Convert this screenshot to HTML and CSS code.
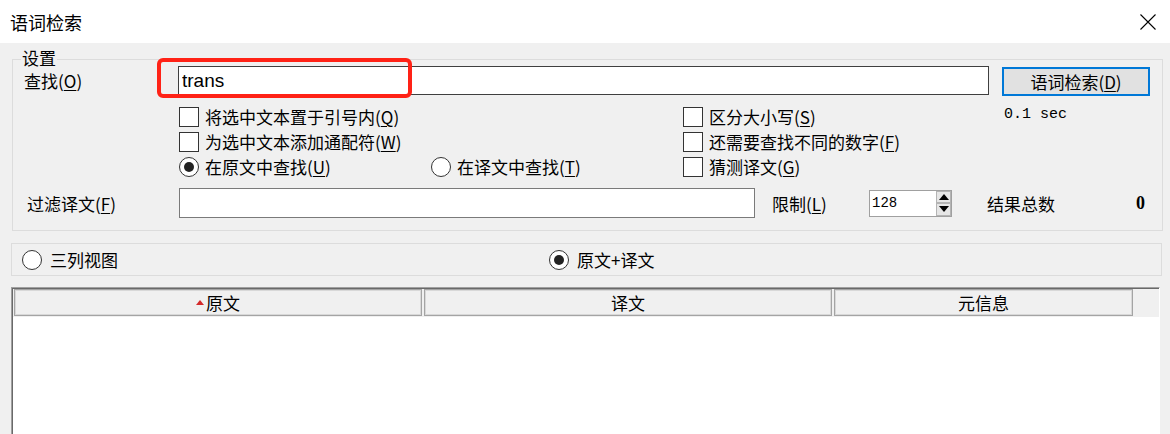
FILE: index.html
```html
<!DOCTYPE html>
<html lang="zh-CN">
<head>
    <meta charset="UTF-8">
    <title>语词检索</title>
    <link rel="stylesheet" href="styles.css">
</head>
<body>
    <div class="titlebar">
        <span class="title">语词检索</span>
        <svg class="close" viewBox="0 0 16 16" width="16" height="16">
            <path d="M0.5 0.5 L15.5 15.5 M15.5 0.5 L0.5 15.5" stroke="#000" stroke-width="1.1" fill="none"/>
        </svg>
    </div>

    <div class="group">
        <div class="group-title">设置</div>

        <div class="search-row">
            <span class="field-label">查找(<u>O</u>)</span>
            <input class="search-box" type="text" value="trans" readonly>
            <button class="search-btn">语词检索(<u>D</u>)</button>
            <div class="highlight"></div>
        </div>

        <div class="options">
            <label class="opt span2"><span class="box"></span><span>将选中文本置于引号内(<u>Q</u>)</span></label>
            <label class="opt"><span class="box"></span><span>区分大小写(<u>S</u>)</span></label>
            <span class="elapsed">0.1 sec</span>

            <label class="opt span2"><span class="box"></span><span>为选中文本添加通配符(<u>W</u>)</span></label>
            <label class="opt col3"><span class="box"></span><span>还需要查找不同的数字(<u>F</u>)</span></label>

            <label class="opt col1"><span class="box radio on"></span><span>在原文中查找(<u>U</u>)</span></label>
            <label class="opt"><span class="box radio"></span><span>在译文中查找(<u>T</u>)</span></label>
            <label class="opt"><span class="box"></span><span>猜测译文(<u>G</u>)</span></label>
        </div>

        <div class="filter-row">
            <span class="filter-label">过滤译文(<u>F</u>)</span>
            <input class="filter-box" type="text" readonly>
            <span class="limit-label">限制(<u>L</u>)</span>
            <div class="spinner">
                <span class="spin-value">128</span>
                <div class="spin">
                    <span class="spin-btn"><i class="arrow up"></i></span>
                    <span class="spin-btn"><i class="arrow down"></i></span>
                </div>
            </div>
            <span class="total-label">结果总数</span>
            <span class="total">0</span>
        </div>
    </div>

    <div class="view-bar">
        <label class="opt view-opt"><span class="box radio"></span><span>三列视图</span></label>
        <label class="opt"><span class="box radio on"></span><span>原文+译文</span></label>
    </div>

    <div class="results">
        <div class="results-inner">
            <div class="results-head">
                <div class="col col-src"><i class="sort"></i><span>原文</span></div>
                <div class="col col-tgt">译文</div>
                <div class="col col-meta">元信息</div>
            </div>
        </div>
    </div>
</body>
</html>
```

FILE: styles.css
```css
* {
    margin: 0;
    padding: 0;
    box-sizing: border-box;
}

body {
    width: 1170px;
    height: 434px;
    overflow: hidden;
    background: #f0f0f0;
    color: #000;
    font-family: "Noto Sans CJK SC", sans-serif;
    font-size: 17px;
}

u {
    text-decoration-thickness: 1px;
    text-underline-offset: 2px;
}

/* window caption */
.titlebar {
    height: 43px;
    background: #fff;
    display: flex;
    align-items: center;
    justify-content: space-between;
    padding: 0 14px 0 10px;
}

.title {
    font-size: 18px;
    line-height: 20px;
}

.close {
    display: block;
}

/* settings group */
.group {
    margin: 16px 7px 0 12px;
    border: 1px solid #dcdcdc;
    padding-bottom: 12px;
}

.group-title {
    width: fit-content;
    margin: -10px 0 0 8px;
    padding: 0 1px;
    line-height: 16px;
    background: #f0f0f0;
}

.search-row {
    position: relative;
    display: flex;
    align-items: flex-start;
    height: 30px;
    padding-left: 11px;
}

.field-label {
    width: 154px;
    line-height: 29px;
}

.search-box {
    width: 811px;
    height: 29px;
    border: 1px solid #3f3f3f;
    background: #fff;
    padding: 0 3px;
    font-family: "Liberation Sans", Arial, sans-serif;
    font-size: 19px;
    color: #000;
    outline: none;
}

.search-btn {
    width: 148px;
    height: 29px;
    margin: 1px 0 0 13px;
    border: 2px solid #0078d7;
    background: #e1e1e1;
    font-family: inherit;
    font-size: 17px;
    color: #000;
    line-height: 24px;
}

/* red marker drawn over the query field */
.highlight {
    position: absolute;
    left: 144px;
    top: -8px;
    width: 255px;
    height: 40px;
    border: 4px solid #ff2216;
    border-radius: 6px;
    pointer-events: none;
}

.options {
    display: grid;
    grid-template-columns: 252px 252px 321px auto;
    grid-auto-rows: 25px;
    margin-top: 8px;
    padding-left: 166px;
}

.opt {
    display: flex;
    align-items: center;
    gap: 6px;
    white-space: nowrap;
}

.span2 {
    grid-column: 1 / span 2;
}

.col1 {
    grid-column: 1;
}

.col3 {
    grid-column: 3;
}

.box {
    flex: none;
    width: 20px;
    height: 20px;
    border: 1px solid #333;
    background: #fff;
}

.radio {
    border-radius: 50%;
    display: flex;
    align-items: center;
    justify-content: center;
}

.radio.on::after {
    content: "";
    width: 10px;
    height: 10px;
    border-radius: 50%;
    background: #222;
}

.elapsed {
    align-self: start;
    margin-top: 1px;
    line-height: 20px;
    font-family: "Liberation Mono", monospace;
    font-size: 15px;
}

.filter-row {
    display: flex;
    align-items: center;
    height: 30px;
    margin-top: 9px;
    padding-left: 14px;
}

.filter-label {
    width: 152px;
}

.filter-box {
    width: 576px;
    height: 30px;
    border: 1px solid #7a7a7a;
    background: #fff;
    outline: none;
}

.limit-label {
    width: 97px;
    margin-left: 17px;
}

.spinner {
    display: flex;
    width: 83px;
    height: 27px;
    border: 1px solid #a0a0a0;
    background: #fff;
}

.spin-value {
    padding-left: 2px;
    line-height: 24px;
    font-family: "Liberation Mono", monospace;
    font-size: 14px;
}

.spin {
    display: flex;
    flex-direction: column;
    width: 15px;
    margin-left: auto;
}

.spin-btn {
    flex: 1;
    display: flex;
    align-items: center;
    justify-content: center;
    background: #e6e6e6;
    border: 1px solid #b4b4b4;
}

.arrow {
    width: 0;
    height: 0;
    border-left: 5px solid transparent;
    border-right: 5px solid transparent;
}

.arrow.up {
    border-bottom: 6px solid #000;
}

.arrow.down {
    border-top: 6px solid #000;
}

.total-label {
    width: 149px;
    margin-left: 35px;
}

.total {
    font-family: "Liberation Serif", serif;
    font-weight: bold;
    font-size: 18px;
}

/* view switch */
.view-bar {
    display: flex;
    align-items: center;
    height: 33px;
    margin: 12px 8px 0 11px;
    padding-left: 10px;
    border: 1px solid #dcdcdc;
}

.view-bar .opt {
    gap: 8px;
}

.view-opt {
    width: 527px;
}

/* results list */
.results {
    height: 148px;
    margin: 11px 10px 0 11px;
    border-top: 1px solid #a0a0a0;
    border-left: 1px solid #a0a0a0;
    border-right: 1px solid #fff;
    background: #fff;
}

.results-inner {
    height: 100%;
    border-top: 1px solid #696969;
    border-left: 1px solid #696969;
}

.results-head {
    display: flex;
    gap: 2px;
    padding: 0 0 1px 1px;
    background: #f0f0f0;
}

.col {
    height: 27px;
    display: flex;
    align-items: center;
    justify-content: center;
    gap: 2px;
    border: 1px solid #a4a4a4;
    box-shadow: inset 0 0 0 1px #d8d8d8;
    background: #f0f0f0;
    line-height: 24px;
}

.col-src,
.col-tgt {
    width: 408px;
}

.col-meta {
    width: 299px;
}

.sort {
    width: 0;
    height: 0;
    border-left: 4px solid transparent;
    border-right: 4px solid transparent;
    border-bottom: 5px solid #d42a2a;
}
```
